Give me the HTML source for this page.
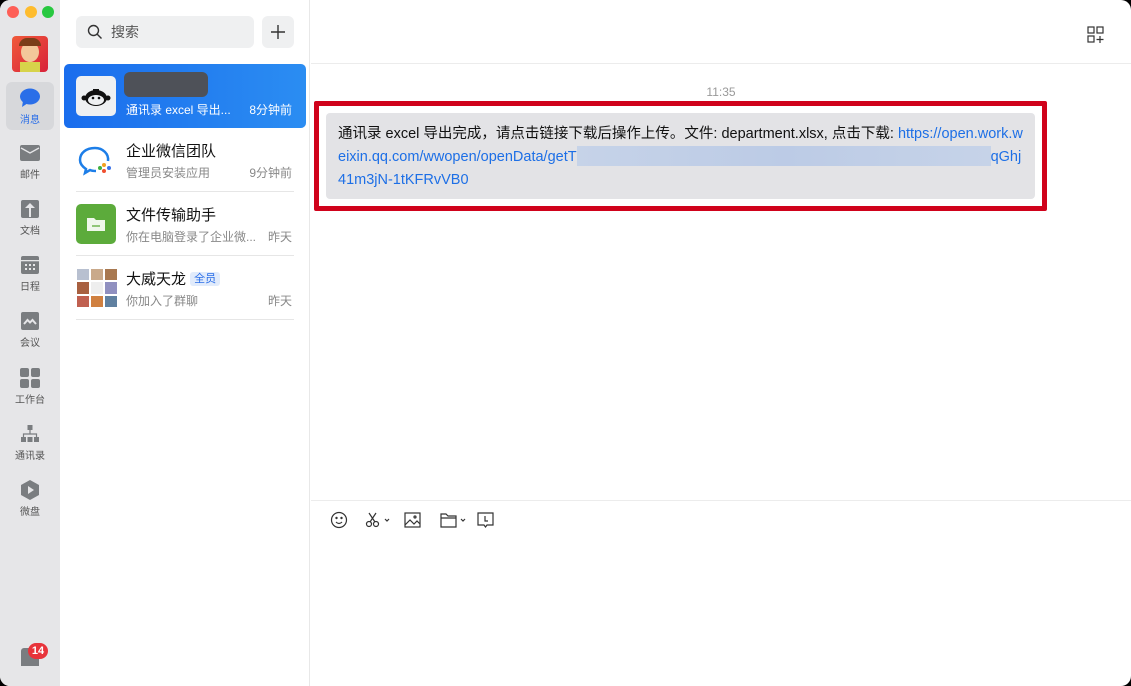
<!DOCTYPE html>
<html><head><meta charset="utf-8"><style>
*{margin:0;padding:0;box-sizing:border-box}
body{width:1131px;height:686px;background:#000;font-family:"Liberation Sans","Noto Sans CJK SC",sans-serif;overflow:hidden}
.win{position:absolute;left:0;top:0;width:1131px;height:686px;border-radius:10px;overflow:hidden;background:#fff}
.side{position:absolute;left:0;top:0;width:60px;height:686px;background:#e6e6e8}
.dot{position:absolute;top:6px;width:12px;height:12px;border-radius:50%}
.nav{position:absolute;left:0;width:60px;text-align:center;font-size:10px;color:#555}
.list{position:absolute;left:60px;top:0;width:250px;height:686px;background:#fff;border-right:1px solid #e8e8e8}
.search{position:absolute;left:16px;top:16px;width:178px;height:32px;background:#eff0f1;border-radius:6px;font-size:14px;color:#555;line-height:32px;padding-left:35px}
.plus{position:absolute;left:202px;top:16px;width:32px;height:32px;background:#eff0f1;border-radius:6px}
.item{position:absolute;left:4px;width:242px;height:64px}
.av{position:absolute;left:12px;top:12px;width:40px;height:40px;border-radius:5px}
.t{position:absolute;left:62px;top:12px;font-size:15px;color:#111}
.s{position:absolute;left:62px;top:36px;font-size:12px;color:#888}
.tm{position:absolute;right:14px;top:36px;font-size:12px;color:#888}
.div{position:absolute;left:12px;right:12px;bottom:0;height:1px;background:#e6e6e6}
.main{position:absolute;left:311px;top:0;width:820px;height:686px}
</style></head><body><div class="win">
<div class="side">
<div class="dot" style="left:7px;background:#fe5f57"></div>
<div class="dot" style="left:25px;background:#febc2e"></div>
<div class="dot" style="left:42px;background:#28c840"></div>
<div style="position:absolute;left:12px;top:36px;width:36px;height:36px;border-radius:4px;background:linear-gradient(135deg,#f05a3a,#d8223a);overflow:hidden"><div style="position:absolute;left:9px;top:6px;width:18px;height:20px;border-radius:50%;background:#f3c79a"></div><div style="position:absolute;left:8px;top:26px;width:20px;height:12px;background:#d7d34a"></div><div style="position:absolute;left:7px;top:2px;width:22px;height:8px;border-radius:8px 8px 0 0;background:#7a3d18"></div></div>
<div style="position:absolute;left:6px;top:82px;width:48px;height:48px;background:#d7d8db;border-radius:6px"></div>
<div class="nav" style="top:88px;color:#2a6ee8"><svg width="22" height="20" viewBox="0 0 22 20" style="display:block;margin:0 auto 3px"><ellipse cx="11" cy="8.5" rx="10" ry="8" fill="#2a6ee8"/><path d="M4 13 L3 19 L9 15Z" fill="#2a6ee8"/></svg>消息</div>
<div class="nav" style="top:145px"><svg width="20" height="16" viewBox="0 0 20 16" style="display:block;margin:0 auto 5px"><rect width="20" height="16" rx="2" fill="#7a7d80"/><path d="M1 3 L10 8 L19 3" stroke="#e6e6e8" stroke-width="1.3" fill="none"/></svg>邮件</div>
<div class="nav" style="top:200px"><svg width="18" height="18" viewBox="0 0 18 18" style="display:block;margin:0 auto 4px"><rect width="18" height="18" rx="2" fill="#7a7d80"/><path d="M9 3 L14 8 H10 V17 H8 V8 H4Z" fill="#e6e6e8"/></svg>文档</div>
<div class="nav" style="top:256px"><svg width="18" height="18" viewBox="0 0 18 18" style="display:block;margin:0 auto 4px"><rect width="18" height="18" rx="2" fill="#7a7d80"/><rect x="0" y="4" width="18" height="1.3" fill="#e6e6e8"/><g fill="#e6e6e8"><rect x="4" y="8" width="2" height="2"/><rect x="8" y="8" width="2" height="2"/><rect x="12" y="8" width="2" height="2"/><rect x="4" y="12" width="2" height="2"/><rect x="8" y="12" width="2" height="2"/><rect x="12" y="12" width="2" height="2"/></g></svg>日程</div>
<div class="nav" style="top:312px"><svg width="18" height="18" viewBox="0 0 18 18" style="display:block;margin:0 auto 4px"><rect width="18" height="18" rx="2" fill="#7a7d80"/><path d="M3 12 L6.5 8 L9 10.5 L11.5 8 L15 12" stroke="#e6e6e8" stroke-width="2" fill="none"/></svg>会议</div>
<div class="nav" style="top:368px"><svg width="20" height="20" viewBox="0 0 20 20" style="display:block;margin:0 auto 3px"><g fill="#7a7d80"><rect width="9" height="9" rx="2"/><rect x="11" width="9" height="9" rx="2"/><rect y="11" width="9" height="9" rx="2"/><rect x="11" y="11" width="9" height="9" rx="2"/></g></svg>工作台</div>
<div class="nav" style="top:425px"><svg width="20" height="18" viewBox="0 0 20 18" style="display:block;margin:0 auto 4px"><g fill="#7a7d80"><rect x="7.5" width="5" height="5"/><rect x="1" y="12" width="5" height="5"/><rect x="7.5" y="12" width="5" height="5"/><rect x="14" y="12" width="5" height="5"/></g><path d="M10 5 V9 M3.5 12 V9 H16.5 V12" stroke="#7a7d80" stroke-width="1.2" fill="none"/></svg>通讯录</div>
<div class="nav" style="top:480px"><svg width="18" height="20" viewBox="0 0 18 20" style="display:block;margin:0 auto 3px"><path d="M9 0 L18 5 V15 L9 20 L0 15 V5Z" fill="#7a7d80"/><path d="M7 6 L13 10 L7 14Z" fill="#e6e6e8"/></svg>微盘</div>
<div style="position:absolute;left:21px;top:648px;width:18px;height:18px;background:#7a7d80;border-radius:3px 3px 0 0"></div>
<div style="position:absolute;left:28px;top:643px;width:20px;height:16px;border-radius:8px;background:#e8343b;color:#fff;font-size:11px;font-weight:bold;text-align:center;line-height:16px">14</div>
</div>
<div class="list">
<div class="search"><svg width="16" height="16" viewBox="0 0 16 16" style="position:absolute;left:11px;top:8px"><circle cx="6.5" cy="6.5" r="5" stroke="#333" stroke-width="1.4" fill="none"/><path d="M10 10 L14.5 14.5" stroke="#333" stroke-width="1.4"/></svg>搜索</div>
<div class="plus"><svg width="32" height="32"><path d="M16 9 V23 M9 16 H23" stroke="#333" stroke-width="1.4"/></svg></div>
<div class="item" style="top:64px;background:linear-gradient(90deg,#1a6ded,#2b8df2);border-radius:5px">
<div class="av" style="background:#eef0f2"><svg width="40" height="40" viewBox="0 0 40 40"><ellipse cx="20" cy="22" rx="11" ry="8" fill="#111"/><ellipse cx="20" cy="24" rx="8" ry="5" fill="#eef0f2"/><circle cx="17" cy="22" r="1.3" fill="#111"/><circle cx="23" cy="22" r="1.3" fill="#111"/><circle cx="8" cy="22" r="2.5" fill="#111"/><circle cx="32" cy="22" r="2.5" fill="#111"/><path d="M17 14 h6" stroke="#111" stroke-width="2"/></svg></div>
<div style="position:absolute;left:60px;top:8px;width:84px;height:25px;background:#4e5158;border-radius:6px"></div>
<div class="s" style="color:#fff;top:37px">通讯录 excel 导出...</div><div class="tm" style="color:#fff;top:37px">8分钟前</div></div>
<div class="item" style="top:128px"><div class="av"><svg width="40" height="40" viewBox="0 0 40 40"><path d="M19 8 C10 8 4 13 4 20 C4 24 7 27 10 29 L9 33 L14 30 C16 31 18 31 20 31" stroke="#1d7ee8" stroke-width="2.5" fill="none"/><path d="M32 21 C33 14 27 8 19 8" stroke="#1d7ee8" stroke-width="2.5" fill="none"/><circle cx="28" cy="25" r="2" fill="#f2a020"/><circle cx="33" cy="28" r="2" fill="#3a72e8"/><circle cx="28" cy="31" r="2" fill="#f05030"/><circle cx="24" cy="28" r="2" fill="#40b040"/></svg></div><div class="t">企业微信团队</div><div class="s">管理员安装应用</div><div class="tm">9分钟前</div><div class="div"></div></div>
<div class="item" style="top:192px"><div class="av" style="background:#5cab3b"><svg width="40" height="40"><path d="M11 14 h7 l2 2 h9 v11 h-18z" fill="#fff" opacity=".9"/><path d="M16 22 h8" stroke="#5cab3b" stroke-width="1.3"/></svg></div><div class="t">文件传输助手</div><div class="s">你在电脑登录了企业微...</div><div class="tm">昨天</div><div class="div"></div></div>
<div class="item" style="top:256px"><div class="av" style="display:grid;grid-template-columns:repeat(3,12px);gap:2px;padding:1px"><i style="background:#b8c0d0"></i><i style="background:#c9a98a"></i><i style="background:#a87850"></i><i style="background:#a86040"></i><i style="background:#eee"></i><i style="background:#9090c0"></i><i style="background:#c06050"></i><i style="background:#d08040"></i><i style="background:#6080a0"></i></div><div class="t">大威天龙 <span style="font-size:11px;color:#2a6ee8;background:#e1ebfb;border-radius:3px;padding:1px 4px;vertical-align:2px">全员</span></div><div class="s">你加入了群聊</div><div class="tm">昨天</div><div class="div"></div></div>
</div>
<div class="main">
<div style="position:absolute;left:0;right:0;top:63px;height:1px;background:#ececec"></div>
<svg width="18" height="18" viewBox="0 0 18 18" style="position:absolute;left:776px;top:26px"><g stroke="#333" stroke-width="1.2" fill="none"><rect x="1" y="1" width="6" height="6"/><rect x="10" y="1" width="6" height="6"/><rect x="1" y="10" width="6" height="6"/><path d="M13 10 V17 M9.5 13.5 H16.5"/></g></svg>
<div style="position:absolute;left:0;width:820px;top:85px;text-align:center;font-size:12px;color:#999">11:35</div>
<div style="position:absolute;left:3px;top:101px;width:733px;height:110px;border:5px solid #d0021b;border-radius:2px"></div>
<div style="position:absolute;left:15px;top:113px;width:709px;height:86px;background:#e3e3e6;border-radius:4px;padding:10px 12px;font-size:14.5px;line-height:23px;color:#111;white-space:nowrap">通讯录 excel 导出完成，请点击链接下载后操作上传。文件: department.xlsx, 点击下载: <span style="color:#1d6fe6">https://open.work.w<br>eixin.qq.com/wwopen/openData/getT<span style="display:inline-block;width:414px;height:20px;vertical-align:-5px;background:linear-gradient(90deg,#c6d3e8,#bccbe6,#c6d3e8)"></span>qGhj<br>41m3jN-1tKFRvVB0</span></div>
<div style="position:absolute;left:0;right:0;top:500px;height:1px;background:#ececec"></div>
<svg width="180" height="24" style="position:absolute;left:18px;top:508px" fill="none" stroke="#333" stroke-width="1.2"><circle cx="10" cy="12" r="7.5"/><circle cx="7.5" cy="10" r=".6" fill="#333"/><circle cx="12.5" cy="10" r=".6" fill="#333"/><path d="M7 14 Q10 17 13 14"/><circle cx="40" cy="16" r="2.5"/><circle cx="47" cy="16" r="2.5"/><path d="M41 14 L47 5 M46 14 L40 5"/><path d="M56 11 l2 2 l2 -2"/><rect x="76" y="5" width="15" height="14"/><path d="M76 17 L81 12 L85 16 L88 13 L91 16"/><circle cx="86" cy="9" r="1"/><path d="M112 6 h5 l2 2 h8 v11 h-15z M112 10 h15"/><path d="M132 11 l2 2 l2 -2"/><path d="M149 5 h15 v12 h-6 l-1.5 2 l-1.5 -2 h-6z M156 8 v5 h3"/></svg>
</div>
</div></body></html>
